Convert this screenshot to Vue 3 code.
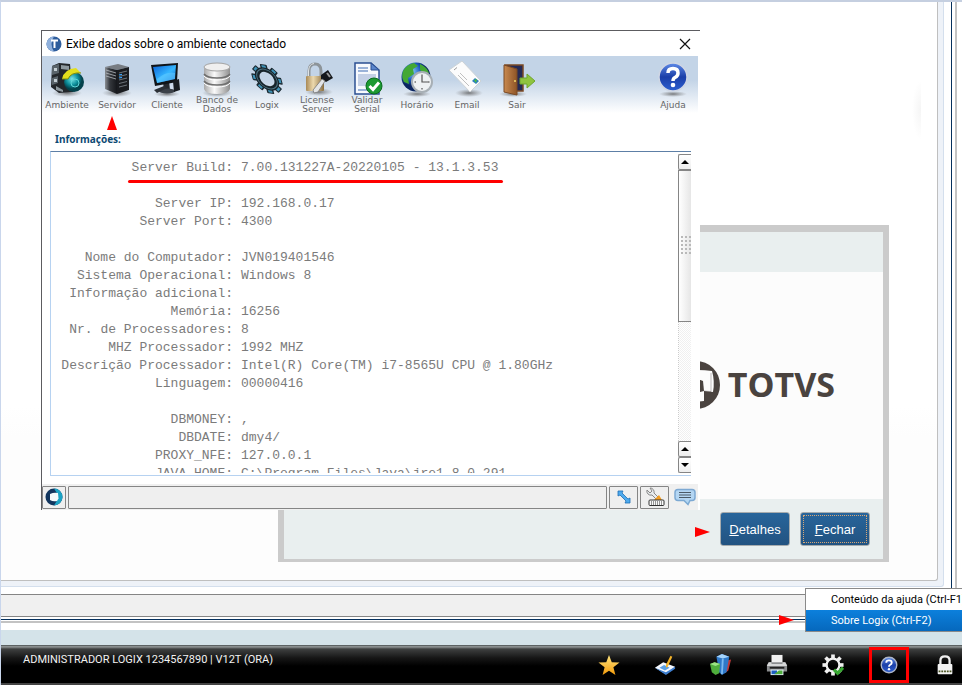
<script setup>
const groups = [
  [['Server Build', '7.00.131227A-20220105 - 13.1.3.53']],
  [
    ['Server IP', '192.168.0.17'],
    ['Server Port', '4300'],
  ],
  [
    ['Nome do Computador', 'JVN019401546'],
    ['Sistema Operacional', 'Windows 8'],
    ['Informação adicional', ''],
    ['Memória', '16256'],
    ['Nr. de Processadores', '8'],
    ['MHZ Processador', '1992 MHZ'],
    ['Descrição Processador', 'Intel(R) Core(TM) i7-8565U CPU @ 1.80GHz'],
    ['Linguagem', '00000416'],
  ],
  [
    ['DBMONEY', ','],
    ['DBDATE', 'dmy4/'],
    ['PROXY_NFE', '127.0.0.1'],
    ['JAVA_HOME', 'C:\\Program Files\\Java\\jre1.8.0_291'],
  ],
]
const gearTeeth = [0, 45, 90, 135, 180, 225, 270, 315]
</script>

<template>
  <div class="screen">
    <svg class="defs" width="0" height="0" aria-hidden="true">
      <defs>
        <linearGradient id="blueBall" x1="0" y1="0" x2="0" y2="1">
          <stop offset="0" stop-color="#5f8be8" /><stop offset=".5" stop-color="#1b3fa8" /><stop offset="1" stop-color="#2d5fd0" />
        </linearGradient>
        <linearGradient id="silver" x1="0" y1="0" x2="1" y2="0">
          <stop offset="0" stop-color="#a9a9a9" /><stop offset=".4" stop-color="#fafafa" /><stop offset="1" stop-color="#8f8f8f" />
        </linearGradient>
        <linearGradient id="tower" x1="0" y1="0" x2="1" y2="0">
          <stop offset="0" stop-color="#8b8f94" /><stop offset=".4" stop-color="#35383d" /><stop offset="1" stop-color="#15171b" />
        </linearGradient>
        <linearGradient id="brass" x1="0" y1="0" x2="1" y2="0">
          <stop offset="0" stop-color="#a98a57" /><stop offset=".4" stop-color="#ecd9ae" /><stop offset="1" stop-color="#8a6d3d" />
        </linearGradient>
        <linearGradient id="lcd" x1="0" y1="0" x2="1" y2="1">
          <stop offset="0" stop-color="#0a63d8" /><stop offset=".55" stop-color="#35b6ff" /><stop offset="1" stop-color="#0a5ccc" />
        </linearGradient>
        <linearGradient id="wood" x1="0" y1="0" x2="1" y2="0">
          <stop offset="0" stop-color="#c98a50" /><stop offset="1" stop-color="#8e5426" />
        </linearGradient>
        <linearGradient id="gold" x1="0" y1="0" x2="0" y2="1">
          <stop offset="0" stop-color="#ffe680" /><stop offset="1" stop-color="#f29a0a" />
        </linearGradient>
        <radialGradient id="shade"><stop offset="0" stop-color="#555" stop-opacity=".75" /><stop offset="1" stop-color="#777" stop-opacity="0" /></radialGradient>
        <radialGradient id="teal" cx=".4" cy=".35"><stop offset="0" stop-color="#7be4e6" /><stop offset=".6" stop-color="#0c8f9c" /><stop offset="1" stop-color="#04424c" /></radialGradient>
        <radialGradient id="ocean" cx=".35" cy=".3"><stop offset="0" stop-color="#8fd0ff" /><stop offset=".6" stop-color="#1c5cc0" /><stop offset="1" stop-color="#0a2460" /></radialGradient>
      </defs>
    </svg>

    <main class="shell">
      <div class="rim">
        <div class="panel">
          <div class="canvas">
            <div class="fold"></div>

            <section class="splash">
              <div class="splash-band"></div>
              <div class="splash-body">
                <svg class="brand-mark" width="48" height="48" viewBox="0 0 48 48">
                  <circle cx="24" cy="24" r="24" fill="#4a433f" />
                  <path d="M10 10Q26 8 40 10Q43 20 41 31L32 30V40Q20 42 9 39Q7 24 10 10Z" fill="#fcfcfc" />
                  <path d="M20 19Q28 18 31 20L32 30Q26 32 20 31Z" fill="#4a433f" />
                  <path d="M32 30L39 30.500V12" fill="none" stroke="#4a433f" stroke-width="1" opacity=".35" />
                </svg>
                <span class="brand-name">TOTVS</span>
              </div>
              <footer class="splash-foot">
                <svg class="pointer" width="15" height="10" viewBox="0 0 15 10"><path d="M0 0L15 5L0 10Z" fill="#f00" /></svg>
                <button class="act" type="button"><u>D</u>etalhes</button>
                <button class="act focused" type="button"><u>F</u>echar</button>
              </footer>
            </section>

            <section class="window">
              <header class="title">
                <svg width="16" height="16" viewBox="0 0 16 16">
                  <circle cx="8" cy="8" r="7.500" fill="#2e5d9c" /><path d="M8 .5A7.500 7.500 0 0 0 8 15.500Q3 8 8 .5Z" fill="#8fb0dc" />
                  <path d="M5 4.500H12M8.500 4.500V12" stroke="#fff" stroke-width="2" fill="none" />
                </svg>
                <h1>Exibe dados sobre o ambiente conectado</h1>
                <button class="close" type="button" aria-label="Fechar janela">
                  <svg width="12" height="12" viewBox="0 0 12 12"><path d="M1 1L11 11M11 1L1 11" stroke="#111" stroke-width="1.200" /></svg>
                </button>
              </header>

              <nav class="tools">
                <button type="button">
                  <svg viewBox="0 0 36 36">
                    <ellipse cx="18" cy="32" rx="15" ry="4" fill="url(#shade)" />
                    <path d="M3 5L10 2L21 3L22 14L31 22L24 31L10 32L2 26Z" fill="#23272b" />
                    <path d="M3 5L10 3V12L3 14ZM3 17L9 15V22L3 24Z" fill="#59636a" /><path d="M5 7H8V10H5ZM5 18H8V21H5Z" fill="#c3cdd2" />
                    <path d="M12 4L20 5V9L12 8ZM7 25L14 29V31L7 29Z" fill="#8d989e" />
                    <circle cx="25" cy="21" r="10" fill="url(#teal)" /><circle cx="26" cy="22" r="4" fill="none" stroke="#5fd6d8" stroke-width="1" />
                    <path d="M13 18Q15 8 27 7L32 12Q22 11 19 18Z" fill="#e3df1c" /><path d="M13 18L19 18Q22 11 32 12" fill="none" stroke="#7d8a10" />
                  </svg>
                  <span>Ambiente</span>
                </button>
                <button type="button">
                  <svg viewBox="0 0 36 36">
                    <ellipse cx="18" cy="32" rx="15" ry="4" fill="url(#shade)" />
                    <path d="M6 6L19 3L30 6L18 9Z" fill="#777c82" /><path d="M6 6L18 9V33L6 28Z" fill="url(#tower)" /><path d="M18 9L30 6V29L18 33Z" fill="#1a1c20" />
                    <path d="M7 9L17 12M7 12L17 15M7 15L17 18" stroke="#b5b9be" stroke-width=".8" />
                    <path d="M20 12L28 10M20 15.500L28 13.500M20 19L28 17M20 22.500L28 20.500M20 26L28 24" stroke="#6c7279" /><path d="M20 14L23 13.300M20 17L23 16.300" stroke="#39a5ff" stroke-width="1.200" />
                  </svg>
                  <span>Servidor</span>
                </button>
                <button type="button">
                  <svg viewBox="0 0 36 36">
                    <ellipse cx="18" cy="33" rx="13" ry="3" fill="url(#shade)" />
                    <path d="M14 21L20 20L21 29H15Z" fill="#252a30" /><ellipse cx="18" cy="30" rx="8" ry="2.500" fill="#3b4148" />
                    <path d="M2 4L29 2L28 21L6 25Z" fill="#101418" /><path d="M4 6L27 4L26 18L8 22Z" fill="url(#lcd)" />
                    <path d="M8 18Q18 10 26 12V18L8 22Z" fill="#61caff" opacity=".6" />
                    <path d="M24 20L30 18L31 29L25 31Z" fill="#181c20" /><path d="M5 29L15 25L18 27L8 32Z" fill="#2c3137" />
                  </svg>
                  <span>Cliente</span>
                </button>
                <button type="button">
                  <svg viewBox="0 0 36 36">
                    <ellipse cx="18" cy="32" rx="15" ry="4" fill="url(#shade)" />
                    <path d="M5 6V28Q6 33 18 33T31 28V6Z" fill="url(#silver)" /><ellipse cx="18" cy="6" rx="13" ry="4" fill="#efefef" stroke="#a4a4a4" />
                    <path d="M5 13Q8 17 18 17T31 13M5 20Q8 24 18 24T31 20" fill="none" stroke="#6f6f6f" stroke-width="1.500" />
                    <path d="M5 15Q8 19 18 19T31 15M5 22Q8 26 18 26T31 22" fill="none" stroke="#fff" />
                  </svg>
                  <span>Banco de<br />Dados</span>
                </button>
                <button type="button">
                  <svg viewBox="0 0 36 36">
                    <g transform="translate(18 18) rotate(42) scale(1.200 .780)">
                      <g v-for="a in gearTeeth" :key="a" :transform="`rotate(${a})`">
                        <rect x="-3.500" y="-15" width="7" height="6" rx="1" fill="#1d2b33" /><rect x="-2" y="-14" width="4" height="3" fill="#3f93b8" />
                      </g>
                      <circle r="9.500" fill="none" stroke="#17242b" stroke-width="4.500" /><circle r="10" fill="none" stroke="#4d7180" stroke-width="1" />
                    </g>
                  </svg>
                  <span>Logix</span>
                </button>
                <button type="button">
                  <svg viewBox="0 0 36 36">
                    <ellipse cx="20" cy="31" rx="14" ry="4" fill="url(#shade)" />
                    <path d="M10 17V10Q10 3 16 3T22 10V17" fill="none" stroke="#8d9499" stroke-width="3" /><path d="M9.500 16V10Q10 3 15 2.500" fill="none" stroke="#dfe3e6" />
                    <rect x="7" y="15" width="18" height="15" rx="1" fill="url(#brass)" />
                    <path d="M22 14L29 9L34 17L27 21L22 18Z" fill="#15171a" /><path d="M28 12L31 16" stroke="#999" stroke-width="2" />
                    <path d="M23 18L14 29L15 32L19 31L26 20Z" fill="#e3e5e7" stroke="#777" stroke-width=".8" />
                  </svg>
                  <span>License<br />Server</span>
                </button>
                <button type="button">
                  <svg viewBox="0 0 36 36">
                    <path d="M6 2H22L30 9V33H6Z" fill="#f7f9fd" stroke="#2b4f92" stroke-width="1.500" /><path d="M22 2V9H30Z" fill="#5a86cc" stroke="#2b4f92" />
                    <path d="M9 7H19M9 10H19M9 29H19" stroke="#7c9bcb" stroke-width="1.500" /><rect x="9" y="13" width="18" height="12" fill="#c4d0e6" />
                    <circle cx="25" cy="25" r="8" fill="#1c9a32" stroke="#0b6a1c" /><path d="M20.500 25L24 28.500L30 21.500" fill="none" stroke="#fff" stroke-width="3" />
                  </svg>
                  <span>Validar<br />Serial</span>
                </button>
                <button type="button">
                  <svg viewBox="0 0 36 36">
                    <ellipse cx="18" cy="33" rx="14" ry="3" fill="url(#shade)" />
                    <circle cx="17" cy="16" r="14.500" fill="url(#ocean)" />
                    <path d="M4 10Q8 3 15 2L19 5L14 8L15 13L9 17L10 23L5 21Q2 16 4 10ZM21 3Q28 6 30 12L25 13L21 9Z" fill="#43a834" />
                    <circle cx="23" cy="21" r="10" fill="#eef1f3" stroke="#a7afb5" stroke-width="2" /><path d="M23 13.500V15M23 27V28.500M15.500 21H17M29 21H30.500" stroke="#333" /><path d="M23 15V21H29" fill="none" stroke="#555" stroke-width="1.200" />
                  </svg>
                  <span>Horário</span>
                </button>
                <button type="button">
                  <svg viewBox="0 0 36 36">
                    <ellipse cx="20" cy="32" rx="14" ry="4" fill="url(#shade)" />
                    <path d="M0 9L13 0L32 20L21 31Z" fill="#fcfcfc" stroke="#ccd2d6" /><path d="M5 9L8 6.500" stroke="#9b9b9b" />
                    <path d="M9 14L17 22M11 12L18 19M13 18L20 25" stroke="#c0c0c0" /><path d="M23 20L26 17L30 20L27 23Z" fill="#2b7fc0" /><path d="M25 19L28 18L27 22Z" fill="#4fbd3b" />
                  </svg>
                  <span>Email</span>
                </button>
                <button type="button">
                  <svg viewBox="0 0 36 36">
                    <ellipse cx="14" cy="33" rx="14" ry="3" fill="url(#shade)" />
                    <path d="M6 4H24V30H18L6 30Z" fill="#262a55" stroke="#7b4a24" stroke-width="1.500" />
                    <path d="M5 4L18 8V34L5 31Z" fill="url(#wood)" stroke="#7b4a24" /><circle cx="16" cy="20" r="1" fill="#f5d76a" />
                    <path d="M21 17H28V13L36 20L28 27V23H21Z" fill="#8fc43f" stroke="#6fa52f" />
                  </svg>
                  <span>Sair</span>
                </button>
                <button class="help" type="button">
                  <svg viewBox="0 0 36 36">
                    <ellipse cx="18" cy="33" rx="14" ry="3" fill="url(#shade)" />
                    <circle cx="18" cy="16" r="14" fill="url(#blueBall)" stroke="#cfd6e4" stroke-width="1.500" />
                    <path d="M13 12Q13 7.500 18 7.500T23 12Q23 15 20 16.500Q18 17.500 18 20" fill="none" stroke="#fff" stroke-width="3.500" /><circle cx="18" cy="24" r="2.300" fill="#fff" />
                  </svg>
                  <span>Ajuda</span>
                </button>
                <svg class="up-pointer" width="10" height="14" viewBox="0 0 10 14"><path d="M5 0L10 14H0Z" fill="#f00" /></svg>
              </nav>

              <h2 class="caption">Informações:</h2>

              <div class="info">
                <div class="lines">
                  <dl v-for="(group, g) in groups" :key="g">
                    <template v-for="[name, value] in group" :key="name">
                      <dt>{{ name }}:</dt>
                      <dd>{{ value }}</dd>
                    </template>
                  </dl>
                  <i class="mark"></i>
                </div>
                <div class="scroll">
                  <button type="button" aria-label="Subir"><svg width="8" height="4" viewBox="0 0 8 4"><path d="M4 0L8 4H0Z" /></svg></button>
                  <div class="thumb"><i class="grip"></i></div>
                  <div class="track"></div>
                  <button type="button" aria-label="Subir linha"><svg width="8" height="4" viewBox="0 0 8 4"><path d="M4 0L8 4H0Z" /></svg></button>
                  <button type="button" aria-label="Descer linha"><svg width="8" height="4" viewBox="0 0 8 4"><path d="M0 0H8L4 4Z" /></svg></button>
                </div>
              </div>

              <footer class="status">
                <button class="cell small" type="button" aria-label="Totvs">
                  <svg width="18" height="18" viewBox="0 0 18 18"><circle cx="9" cy="9" r="8.500" fill="#12355e" /><path d="M9 .5A8.500 8.500 0 0 1 9 17.500Q16 9 9 .5Z" fill="#1ba3c4" /><path d="M5 6Q9 4 13 5L13.500 10.500L12 13Q8 14 5 12Z" fill="#f4f9fb" /></svg>
                </button>
                <input class="cell message" type="text" aria-label="Mensagem" readonly />
                <button class="cell" type="button" aria-label="Redimensionar">
                  <svg width="14" height="14" viewBox="0 0 14 14"><path d="M1 1H6L5 3L11 9L13 8V13H8L9 11L3 5L1 6Z" fill="#4fabee" stroke="#1d6db4" stroke-width=".8" /></svg>
                </button>
                <button class="cell" type="button" aria-label="Ferramentas">
                  <svg width="20" height="20" viewBox="0 0 20 20"><path d="M2 3A4 4 0 0 0 7 8L13 14L15 12L9 6A4 4 0 0 0 5 1L7 4L5 6Z" fill="#e8ebed" stroke="#888" /><path d="M9 13L14 8L17 13Z" fill="#f39c1f" /><rect x="4" y="13" width="15" height="5.500" rx="1" fill="#fafafa" stroke="#333" /><path d="M6 15H17M6 17H17" stroke="#333" stroke-dasharray="1 1" /></svg>
                </button>
                <button class="bubble" type="button" aria-label="Mensagens">
                  <svg width="22" height="18" viewBox="0 0 22 18"><path d="M4 1.500H18Q21 1.500 21 4.500V9.500Q21 12.500 18 12.500H16L14 16.500L10 12.500H4Q1 12.500 1 9.500V4.500Q1 1.500 4 1.500Z" fill="#b4d6f3" stroke="#7da9d3" stroke-width="1.500" /><path d="M5 4.500H17M5 7H17M5 9.500H17" stroke="#4b5a68" /></svg>
                </button>
              </footer>
            </section>
          </div>
        </div>
        <div class="message-bar"></div>
      </div>
    </main>

    <div class="strip"></div>

    <footer class="dock">
      <p>ADMINISTRADOR LOGIX 1234567890 | V12T (ORA)</p>
      <button type="button" aria-label="Favoritos">
        <svg viewBox="0 0 24 24"><path d="M12 1L15 9L23.500 9.200L16.800 14.500L19 23L12 18.200L5 23L7.200 14.500L.5 9.200L9 9Z" fill="url(#gold)" /></svg>
      </button>
      <button type="button" aria-label="Editar">
        <svg viewBox="0 0 24 24"><path d="M1 15L10 9L23 14L13 22Z" fill="#f5f9ff" /><path d="M1 15L13 20L23 14V16L13 23Z" fill="#3e7fd0" /><path d="M6 15L11 12L17 15L12 18Z" fill="#5aa0e6" /><path d="M18 2L20 3L15 14L13 15V12Z" fill="#f3b32a" /></svg>
      </button>
      <button type="button" aria-label="Indicadores">
        <svg viewBox="0 0 24 24"><path d="M18 7L23 6L20 18L16 21Z" fill="#c03a3a" /><path d="M7 3L13 0L21 3L18 20L13 23L10 20Z" fill="#2e78c8" /><path d="M7 3L13 0L21 3L14 5Z" fill="#a5d4fb" /><path d="M14 5L13 22" stroke="#7ab8f0" stroke-width="2" /><path d="M0 11L5 9L11 11L10 21L6 23L2 20Z" fill="#4fae3c" /><path d="M0 11L5 9L11 11L6 13Z" fill="#9be383" /></svg>
      </button>
      <button type="button" aria-label="Imprimir">
        <svg viewBox="0 0 24 24"><path d="M6 1H18V10H6Z" fill="#f1f1f1" /><path d="M3 9H21L23 12V19H1V12Z" fill="#8b8d8f" /><path d="M3 9H6V11H18V9H21L23 13H1Z" fill="#d6d7d8" /><path d="M4 14H20V16H4Z" fill="#222" /><path d="M5 17H19V23H5Z" fill="#e7f2fb" /><path d="M6 18H12V22H6Z" fill="#1d5fc2" /><path d="M9 22L14 18H18V22Z" fill="#4fae3c" /></svg>
      </button>
      <button type="button" aria-label="Configurar">
        <svg viewBox="0 0 24 24">
          <g transform="translate(12 12)"><rect v-for="a in gearTeeth" :key="a" :transform="`rotate(${a})`" x="-2" y="-11.500" width="4" height="5" fill="#f0f0f0" /><circle r="7" fill="none" stroke="#f0f0f0" stroke-width="2.500" /></g>
          <path d="M13 17L17 21L23 15" fill="none" stroke="#38a832" stroke-width="3.500" />
        </svg>
      </button>
      <button class="picked" type="button" aria-label="Ajuda">
        <svg viewBox="0 0 24 24"><circle cx="12" cy="12" r="8.500" fill="url(#blueBall)" stroke="#aeb6c8" stroke-width="1.500" /><path d="M9 9.500Q9 7 12 7T15 9.500Q15 11 13 12Q12 12.500 12 14" fill="none" stroke="#fff" stroke-width="2" /><circle cx="12" cy="16.500" r="1.300" fill="#fff" /></svg>
      </button>
      <button type="button" aria-label="Bloquear">
        <svg viewBox="0 0 24 24"><path d="M7 12V7Q7 2.500 12 2.500T17 7V12" fill="none" stroke="#efefef" stroke-width="2.500" /><rect x="4" y="11" width="16" height="11" rx="1" fill="#f3f3f3" /><path d="M5 19H19" stroke="#4a5522" stroke-width="2" stroke-dasharray="2 1" /></svg>
      </button>
    </footer>

    <div class="menu">
      <button type="button">Conteúdo da ajuda (Ctrl-F1)</button>
      <button class="active" type="button">Sobre Logix (Ctrl-F2)</button>
    </div>
    <svg class="menu-pointer" width="15" height="10" viewBox="0 0 15 10"><path d="M0 0L15 5L0 10Z" fill="#f00" /></svg>
  </div>
</template>

<style>
body { overflow: hidden; }
</style>

<style scoped>
* { box-sizing: border-box; }
button { padding: 0; border: 0; background: none; font: inherit; color: inherit; }
h1, h2, p, dl, dd { margin: 0; }
svg { display: block; flex: none; }

.screen {
  position: relative;
  display: flex;
  flex-direction: column;
  height: 100vh;
  overflow: hidden;
  border-left: 1px solid #c9d6ec;
  border-top: 2px solid #c5cfe0;
  background: #fff;
  font-family: "Liberation Sans", Arial, sans-serif;
  font-size: 11px;
}
.defs { position: absolute; }

.shell { flex: 1; min-height: 0; display: flex; margin-right: 5px; padding: 0 3px 1px 0; border: solid #c3c3c3; border-width: 0 2px 2px 0; }
.rim { flex: 1; display: flex; flex-direction: column; border: solid #05305c; border-width: 0 1px 1px 0; }
.panel { flex: 1; display: flex; margin-right: 7px; padding: 0 5px 5px 0; border: solid #d4dfed; border-width: 0 1px 1px 0; border-radius: 0 0 3px 0; background: #eef2f8; }
.canvas { position: relative; flex: 1; overflow: hidden; border: solid #bfbfbf; border-width: 0 1px 1px 0; border-radius: 0 0 3px 0; background: linear-gradient(#fff 70%, #fdfdfd 75%); }
.fold { position: absolute; left: 911px; top: 78px; width: 9px; height: 60px; background: radial-gradient(ellipse at right, #f5f5f5, #fff 70%); }
.message-bar { height: 23px; margin: 7px 0 2px; border: solid #858585; border-width: 1px 0; background: #f0f0f0; }

.splash { position: absolute; left: 277px; top: 223px; width: 611px; height: 337px; display: flex; flex-direction: column; border: solid #cbcbcb; border-width: 7px 6px 3px; }
.splash-band { height: 40px; background: #e9efef; }
.splash-body { flex: 1; display: flex; align-items: center; justify-content: flex-end; gap: 8px; padding: 0 48px 1px 0; background: #fcfcfc; }
.brand-name { padding-bottom: 2px; font: 700 34px/40px "Open Sans", sans-serif; color: #4a433f; }
.splash-foot { display: flex; align-items: center; justify-content: flex-end; gap: 10px; height: 60px; padding-right: 13px; background: #e9efef; }
.pointer { margin-top: 6px; }
.act { width: 70px; height: 34px; border: 1px solid #a7acae; border-radius: 3px; background: linear-gradient(#28659b, #225381); color: #fff; font-size: 13px; }
.focused { outline: 1px dotted #d9a877; outline-offset: -4px; }

.window { position: absolute; left: 40px; top: 28px; width: 659px; height: 480px; display: flex; flex-direction: column; border: solid #5c5c60; border-width: 1px 0 0 1px; background: #fff; }
.title { display: flex; align-items: center; gap: 4px; height: 25px; padding: 0 9px 0 4px; }
.title h1 { flex: 1; font: 400 12px/16px Roboto, sans-serif; color: #000; }
.tools { position: relative; display: flex; height: 60px; margin-right: 2px; padding-top: 5px; background: linear-gradient(#c3d4e7 0 40%, #fff 95%); }
.tools button { display: flex; flex-direction: column; align-items: center; width: 50px; height: 54px; }
.tools button svg { width: 36px; height: 36px; }
.tools .help { margin-left: auto; }
.tools span { display: flex; align-items: center; height: 16px; font: 9px/9px "DejaVu Sans", sans-serif; color: #666; white-space: nowrap; }
.up-pointer { position: absolute; left: 65px; top: 60px; }
.caption { margin: 14px 0 3px 13px; font: 700 10px/18px "Noto Sans", sans-serif; color: #0d4a73; }
.info { flex: 1; min-height: 0; display: flex; margin: 0 9px 8px 8px; border: solid #b6d2f1; border-width: 1px 0 1px 1px; border-top-color: #5d7fa6; }
.lines { position: relative; flex: 1; overflow: hidden; margin-bottom: 2px; padding-top: 7px; font: 13px/18px "Liberation Mono", "Courier New", monospace; color: #7b7b7b; }
.lines dl { display: grid; grid-template-columns: 182px 1fr; column-gap: 8px; margin-bottom: 18px; }
.lines dt { text-align: right; }
.lines dd { min-height: 18px; white-space: pre; }
.mark { position: absolute; left: 77px; top: 28px; width: 375px; height: 3px; border-radius: 2px; background: #f00; }
.scroll { display: flex; flex-direction: column; width: 13px; margin: 2px 0; }
.scroll button { display: flex; align-items: center; justify-content: center; height: 16px; border: 1px solid #858585; border-right: 0; border-radius: 2px 0 0 2px; background: linear-gradient(#fff, #eee); }
.thumb { display: flex; align-items: center; height: 152px; border: 1px solid #858585; border-right: 0; background: linear-gradient(90deg, #fff, #e6e6e6); }
.grip { flex: 1; height: 20px; margin-left: 2px; background: radial-gradient(circle at 1px 1px, #b9b9b9 1px, transparent 1px) 0 0 / 4px 4px; }
.track { flex: 1; border-left: 1px dotted #ccc; background: repeating-conic-gradient(#f0f0f0 0 25%, #fff 0 50%) 0 0 / 2px 2px; }

.status { display: flex; align-items: center; gap: 2px; height: 26px; margin-right: 2px; background: #f0f0f0; }
.cell { display: flex; align-items: center; justify-content: center; width: 29px; height: 23px; border: 1px solid #858585; border-radius: 1px; background: #efefef; }
.small { width: 24px; }
.message { flex: 1; min-width: 0; padding: 0; }
.bubble { width: 27px; display: flex; justify-content: center; }

.strip { height: 15px; margin-top: 7px; background: #d4e3e9; }
.dock { display: flex; align-items: center; gap: 22px; height: 40px; border-top: 1px solid #5c6263; border-bottom: 2px solid #444; background: linear-gradient(#8a8f8f 0 1px, #3e4040 3px, #161616 12px, #000 20px); color: #f2f2f2; }
.dock p { flex: 1; padding: 0 0 11px 22px; font-family: Roboto, sans-serif; }
.dock button { position: relative; display: flex; align-items: center; justify-content: center; width: 34px; height: 34px; }
.dock button svg { width: 22px; height: 22px; }
.picked::after { content: ""; position: absolute; inset: -1px -3px; border: 3px solid #f00; }

.menu { position: absolute; right: 0; bottom: 53px; width: 157px; overflow: hidden; border: solid #8a8a8a; border-width: 1px 0 1px 1px; background: #fff; }
.menu button { display: block; height: 21px; width: 100%; padding-left: 25px; text-align: left; white-space: nowrap; color: #000; font-family: Roboto, sans-serif; }
.menu .active { background: linear-gradient(#0c80dc, #0668bd); color: #fff; }
.menu-pointer { position: absolute; right: 168px; bottom: 60px; }
</style>
